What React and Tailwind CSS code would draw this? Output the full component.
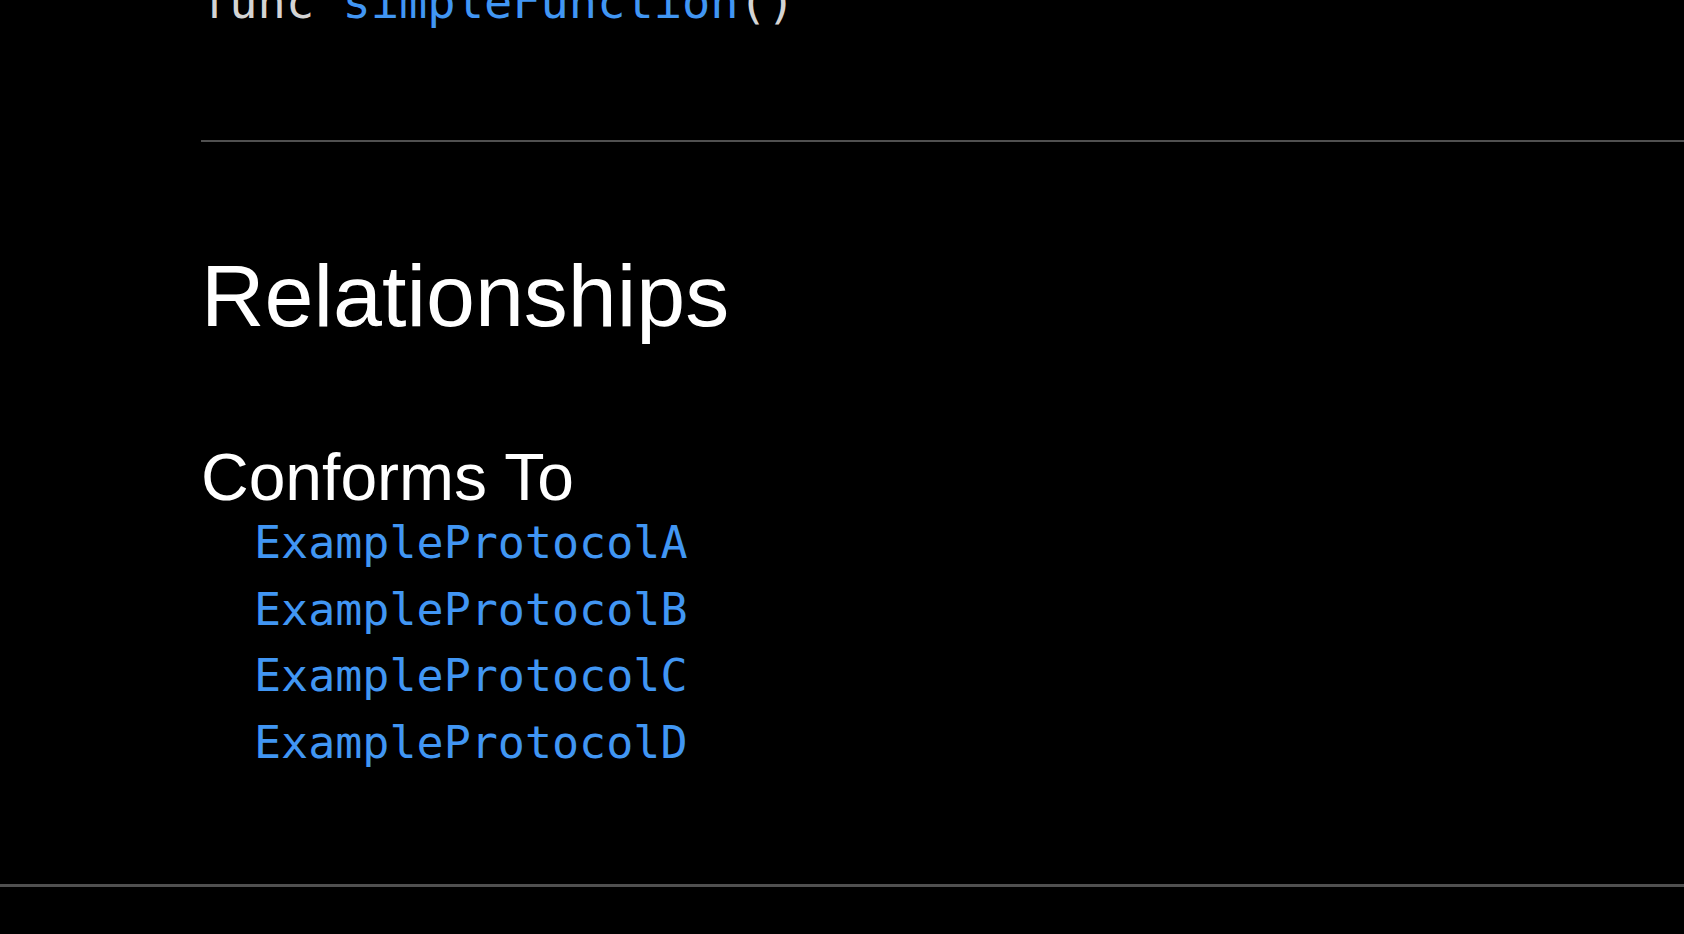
const protocols = ["ExampleProtocolA", "ExampleProtocolB", "ExampleProtocolC", "ExampleProtocolD"]

const App = () => {
    return (
        <main className="min-h-screen bg-black overflow-hidden">
            {/* Declaration (scrolled partly out of view) */}
            <section className="pl-[201px]">
                <pre className="-mt-[22px] text-[47px] leading-none text-[#d4d4d4] font-['DejaVu_Sans_Mono',monospace]">
                    func <span className="text-[#4196f3]">simpleFunction</span>()
                </pre>
                <div className="mt-[115px] h-[2px] bg-[#505050]"></div>
            </section>

            {/* Relationships */}
            <section className="pl-[201px] pb-[108px] font-['Liberation_Sans',Arial,sans-serif] text-white">
                <h2 className="mt-[110px] text-[88px] leading-none">Relationships</h2>
                <h3 className="mt-[104px] text-[66px] leading-none">Conforms To</h3>
                <ul className="pl-[53px] font-['DejaVu_Sans_Mono',monospace] text-[45px] leading-[66.5px] text-[#4196f3]">
                    {protocols.map((name) => (
                        <li key={name}>{name}</li>
                    ))}
                </ul>
            </section>

            <div className="h-[3px] bg-[#505050]"></div>
        </main>
    )
}

export default App
